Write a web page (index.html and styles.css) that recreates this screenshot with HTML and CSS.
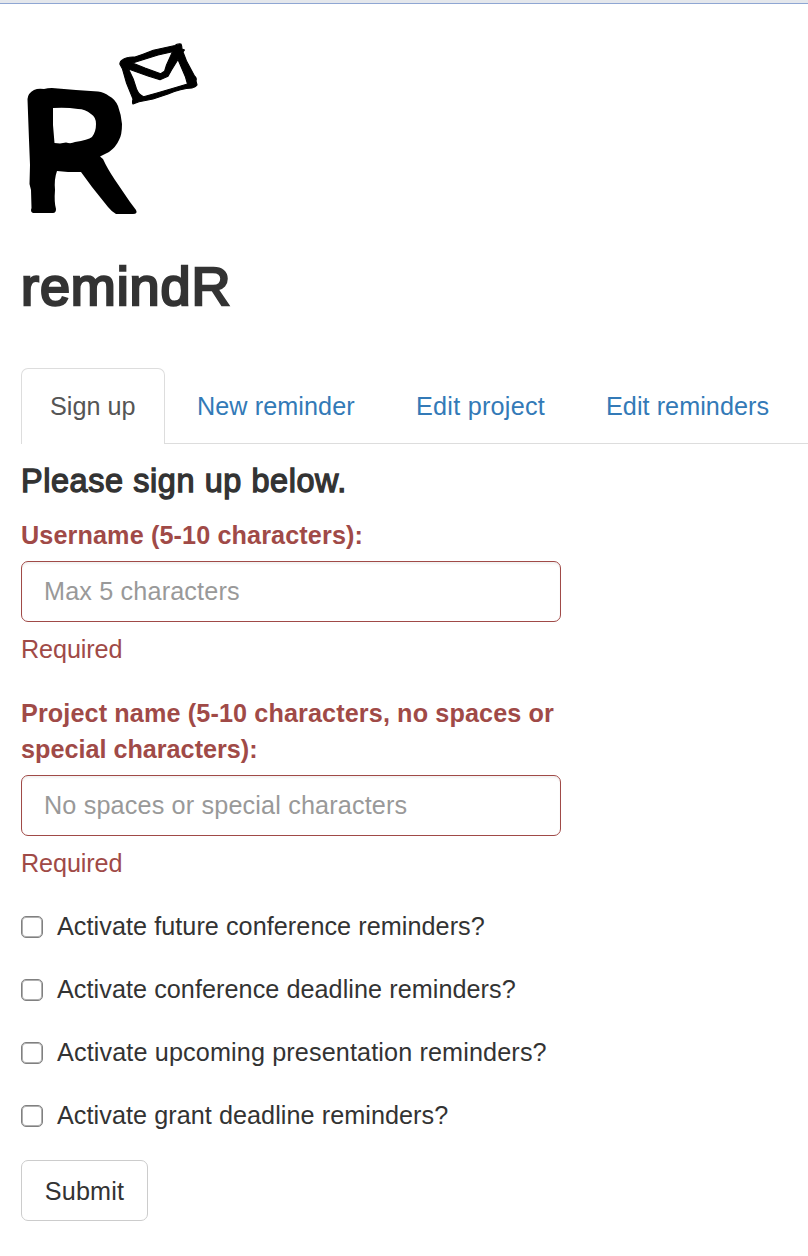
FILE: index.html
```
<!DOCTYPE html>
<html lang="en">
<head>
<meta charset="utf-8">
<title>remindR</title>
<link rel="stylesheet" href="styles.css">
</head>
<body>
<div class="topbar"></div>
<main class="page">
  <svg class="logo" viewBox="0 0 220 230" width="220" height="230" role="img" aria-label="remindR logo">
    <path fill-rule="evenodd" d="M27.500 99Q28 93 34 90Q38 88 44 89Q50 87.500 58 88.500L76 90L98 91.500Q104 92 109 96Q115 99 118 106Q121 114 122 124Q122 135 119 140Q116 147 109 152L100 156.500L103 159Q107 168 115 180L130 202L136 210Q138 214 133 214L116 214Q112 212 108 207L92 187L81 172L68 172L57 171Q54 179 55 190Q54 202 56 209Q56 213 53 213L33 213Q30 212 31.500 208L31 190L29.500 184L30 165L29 140L28 113ZM53 108L53 125L54.500 143L60 143.500L66 142.500Q71 144 75 142Q88 140 92 137Q96 132 96 124Q96 117 91 114Q85 109 78 109Q66 107 53 108Z"/>
    <path class="envelope" fill-rule="evenodd" d="M119.800 64Q120 61 123 59.500Q127 56.500 135 57Q143 54.500 153.300 50.300L175 45.500Q177 43.500 181 44Q182 46 182 49L184.500 50L183 52L186.500 61L194.500 76Q197 78 196 81L197 85Q195.500 87.500 192 88Q181 88.500 168 94L153 99L139 101.700L133 104Q132 103 133 99L126.500 83L122.500 69ZM132.500 63L145 68L160.700 73.800L164.500 71.300L166.500 65L172.500 51.800L158 55ZM128.500 69Q134 79 136.500 89Q138.500 94 141.500 95.500L143.500 96.800L157 93L174 88L187.500 84L185.500 77L178 59.500L171.500 70L168 76.300L164 78L160 79.800L148 76Z"/>
  </svg>
  <h2 class="brand"><span>remindR</span></h2>
  <ul class="tabs">
    <li class="tab tab-active"><a class="t-sign">Sign up</a></li>
    <li class="tab t2"><a class="t-new">New reminder</a></li>
    <li class="tab t3"><a class="t-proj">Edit project</a></li>
    <li class="tab t4"><a class="t-rem">Edit reminders</a></li>
  </ul>
  <form class="form">
    <h4 class="heading"><span>Please sign up below.</span></h4>
    <div class="group">
      <label class="label" for="user"><span class="l1">Username (5-10 characters):</span></label>
      <input class="control" id="user" type="text" placeholder="Max 5 characters">
      <div class="help"><span>Required</span></div>
    </div>
    <div class="group">
      <label class="label" for="proj"><span class="l2">Project name (5-10 characters, no spaces or</span><br><span class="l3">special characters):</span></label>
      <input class="control" id="proj" type="text" placeholder="No spaces or special characters">
      <div class="help"><span>Required</span></div>
    </div>
    <div class="checks">
      <label class="check"><input class="box" type="checkbox"><span>Activate future conference reminders?</span></label>
      <label class="check"><input class="box" type="checkbox"><span>Activate conference deadline reminders?</span></label>
      <label class="check"><input class="box" type="checkbox"><span class="wide">Activate upcoming presentation reminders?</span></label>
      <label class="check"><input class="box" type="checkbox"><span>Activate grant deadline reminders?</span></label>
    </div>
    <button class="submit" type="button"><span>Submit</span></button>
  </form>
</main>
</body>
</html>
```
FILE: styles.css
```
* { box-sizing: border-box; }
body {
  margin: 0;
  background: #fff;
  color: #333;
  font: 25.2px/36px "Helvetica Neue", Helvetica, "Liberation Sans", Arial, sans-serif;
  overflow: hidden;
}
.topbar { height: 4px; background: #e4e7ec; border-bottom: 1px solid #8fa6d3; }
.page { padding-left: 21px; }
.logo { display: block; margin: -4px 0 0 -21px; }
.envelope { stroke: #000; stroke-width: 1.1px; stroke-linejoin: round; }
.brand {
  margin: 26px 0 0;
  font-size: 54px;
  line-height: 60px;
  font-weight: 400;
  letter-spacing: 0.9px;
  -webkit-text-stroke: 2.5px #333;
}
.tabs {
  display: flex;
  margin: 52px 0 0;
  padding: 0;
  list-style: none;
  height: 76px;
  border-bottom: 1px solid #ddd;
  color: #337ab7;
}
.tab { height: 76px; padding: 20px 0 0 29px; white-space: nowrap; }
.tab-active {
  width: 144px;
  padding: 19px 0 0 28px;
  color: #555;
  background: #fff;
  border: 1px solid #ddd;
  border-bottom: 0;
  border-radius: 7px 7px 0 0;
}
.t2 { width: 219px; padding-left: 32px; letter-spacing: 0.08px; }
.t3 { width: 190px; padding-left: 32px; letter-spacing: 0.25px; }
.t4 { padding-left: 32px; letter-spacing: 0.05px; }
.heading {
  margin: 19px 0 0;
  font-size: 32.4px;
  line-height: 36px;
  font-weight: 400;
  letter-spacing: 0.6px;
  white-space: nowrap;
  -webkit-text-stroke: 1.3px #333;
}
.form { width: 540px; }
.label { display: block; margin-bottom: 8px; color: #a04a47; font-weight: 700; white-space: nowrap; letter-spacing: 0.12px; }
.l3 { letter-spacing: 0; }
.heading + .group { margin-top: 18px; }
.group { margin-bottom: 28px; }
.control {
  display: block;
  width: 540px;
  height: 61px;
  padding: 0 22px;
  border: 1px solid #a04a47;
  border-radius: 7px;
  background: #fff;
  font: inherit;
  letter-spacing: 0.16px;
  box-shadow: inset 0 2px 2px rgba(0,0,0,.05);
}
.control::placeholder { color: #999; opacity: 1; }
.help { margin-top: 9px; color: #a04a47; letter-spacing: -0.1px; }
.checks { display: grid; gap: 27px; }
.group + .checks { margin-top: -1px; }
.check { display: flex; align-items: center; white-space: nowrap; letter-spacing: 0.06px; }
.wide { letter-spacing: 0.13px; }
.box { appearance: none; width: 22px; height: 22px; margin: 1px 14px 0 0; border: 1px solid #808080; border-radius: 5px; background: #fff; box-shadow: inset 0 0 0 1px #b0b0b0; }
.submit {
  display: block;
  margin-top: 27px;
  width: 127px;
  height: 61px;
  padding: 0;
  border: 1px solid #ccc;
  border-radius: 7px;
  background: #fff;
  color: #333;
  font: inherit;
  letter-spacing: 0.15px;
}
```
